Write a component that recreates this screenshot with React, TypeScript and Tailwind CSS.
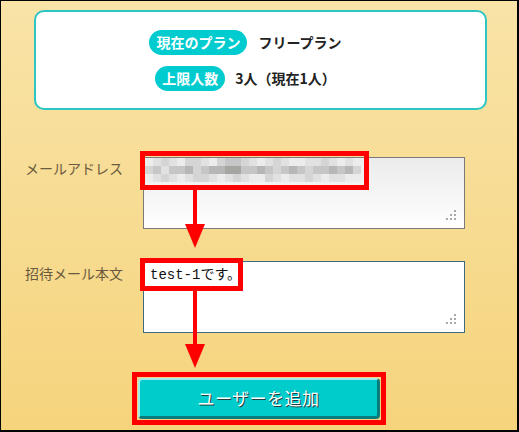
const shade: Record<string, string> = {
  a: "#ececec",
  b: "#e1e1e1",
  c: "#d5d5d5",
  d: "#c6c6c6",
  e: "#b6b6b6",
  f: "#a5a5a1",
};

const mosaicRows = [
  "abcbaccbacddcbabcbaabbcbaba",
  "cdbddecdeeffddedcdedcddedec",
  "abcbabccbabcbaacbabbcbabbaa",
];

const ResizeGrip = () => (
  <svg
    width="10"
    height="10"
    viewBox="0 0 10 10"
    className="absolute right-[8px] bottom-[8px]"
  >
    <rect x="8" y="0" width="2" height="2" fill="#a9a9a9" />
    <rect x="4" y="4" width="2" height="2" fill="#a9a9a9" />
    <rect x="8" y="4" width="2" height="2" fill="#a9a9a9" />
    <rect x="0" y="8" width="2" height="2" fill="#a9a9a9" />
    <rect x="4" y="8" width="2" height="2" fill="#a9a9a9" />
    <rect x="8" y="8" width="2" height="2" fill="#a9a9a9" />
  </svg>
);

const Arrow = ({ top, length }: { top: string; length: string }) => (
  <div className={`absolute left-[184px] flex flex-col items-center w-[20px] ${top}`}>
    <div className={`w-[4px] bg-[#ff0000] ${length}`} />
    <svg width="20" height="24" viewBox="0 0 20 24">
      <polygon points="0,0 20,0 10,24" fill="#ff0000" />
    </svg>
  </div>
);

export default function App() {
  return (
    <div
      className="relative w-[519px] h-[432px] overflow-hidden border-t border-l border-r-2 border-b-2 border-black bg-gradient-to-b from-[#f9e3a7] to-[#f5d47c]"
      style={{ fontFamily: '"Noto Sans CJK JP", "Noto Sans", sans-serif' }}
    >
      {/* plan card */}
      <div className="mt-[9px] ml-[33px] w-[453px] h-[100px] rounded-[10px] border-2 border-[#2cc6c3] bg-white flex flex-col items-center justify-center gap-[11px] pr-[30px]">
        <div className="flex items-center gap-[11px]">
          <span className="h-[25px] px-[7px] rounded-full bg-[#00cccf] text-white text-[14px] font-bold leading-[25px]">
            現在のプラン
          </span>
          <span className="text-[14px] font-bold text-[#222]">フリープラン</span>
        </div>
        <div className="flex items-center gap-[10px]">
          <span className="h-[25px] px-[7px] rounded-full bg-[#00cccf] text-white text-[14px] font-bold leading-[25px]">
            上限人数
          </span>
          <span className="text-[14px] font-bold text-[#222]">3人（現在1人）</span>
        </div>
      </div>

      {/* email */}
      <div className="mt-[47px] flex items-start">
        <div className="w-[142px] pl-[24px] pt-[1px] text-[14px] leading-[20px] text-[#6b5a3d]">
          メールアドレス
        </div>
        <div className="relative w-[322px] h-[72px] border border-[#7a7a7a] bg-gradient-to-b from-[#ebebeb] to-white">
          <div className="pl-[1px] pt-[0px] flex flex-col">
            {mosaicRows.map((row, r) => (
              <div key={r} className="flex">
                {row.split("").map((k, i) => (
                  <div
                    key={i}
                    className="w-[8px] h-[8px]"
                    style={{ backgroundColor: shade[k] }}
                  />
                ))}
              </div>
            ))}
          </div>
          <ResizeGrip />
          <div className="absolute left-[-4px] top-[-7px] w-[229px] h-[39px] border-[5px] border-[#ff0000]" />
        </div>
      </div>

      {/* message */}
      <div className="mt-[32px] flex items-start">
        <div className="w-[142px] pl-[24px] pt-[2px] text-[14px] leading-[20px] text-[#6b5a3d]">
          招待メール本文
        </div>
        <div className="relative w-[322px] h-[72px] border border-[#3d6b82] bg-white">
          <div
            className="pl-[6px] pt-[2px] text-[14px] leading-[22px] text-[#111]"
            style={{ fontFamily: '"Liberation Mono", "Noto Sans CJK JP", monospace' }}
          >
            test-1です。
          </div>
          <ResizeGrip />
          <div className="absolute left-[-4px] top-[-4px] w-[103px] h-[33px] border-[5px] border-[#ff0000]" />
        </div>
      </div>

      {/* submit */}
      <div className="mt-[39px] mx-auto w-[254px] h-[53px] border-[5px] border-[#ff0000] p-[1px]">
        <button className="w-full h-full rounded-[4px] bg-[#00cccc] border-t-2 border-l-2 border-t-[#a5e9e9] border-l-[#a5e9e9] border-b-[3px] border-r-[3px] border-b-[#0a7a7a] border-r-[#0a7a7a] text-white text-[17px] tracking-[0.5px] [text-shadow:1px_1px_0_#1d3f3f]">
          ユーザーを追加
        </button>
      </div>

      <Arrow top="top-[189px]" length="h-[34px]" />
      <Arrow top="top-[290px]" length="h-[53px]" />
    </div>
  );
}
